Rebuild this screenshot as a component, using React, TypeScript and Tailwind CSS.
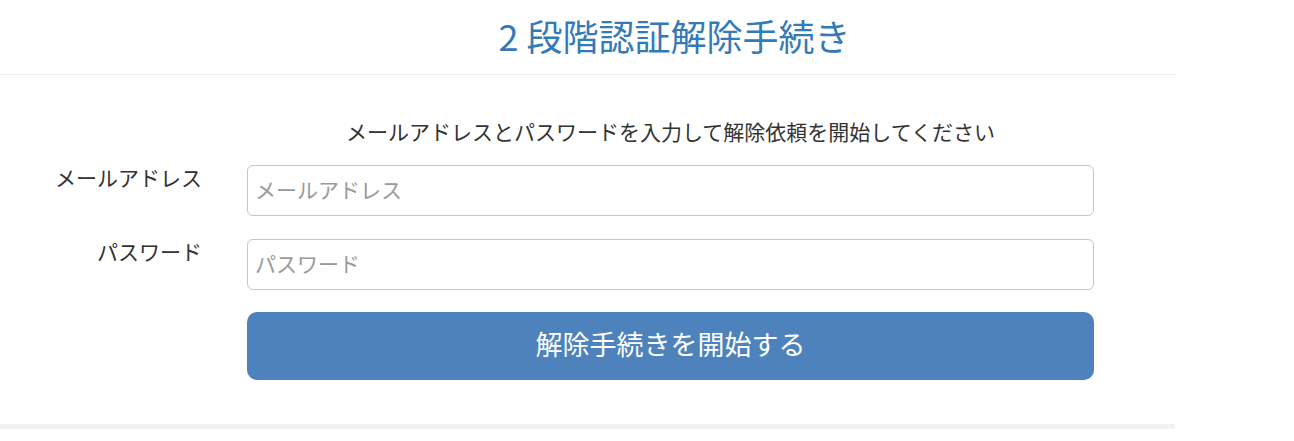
import React from "react";

const font = { fontFamily: '"Noto Sans CJK JP", "Noto Sans", sans-serif' };

export default function App() {
  return (
    <div className="w-[1294px] h-[441px] bg-white" style={font}>
      <div className="w-[1175px]">
        {/* page header */}
        <div className="h-[75px] border-b border-[#eeeeee] flex">
          <div className="w-[247px] shrink-0" />
          <h1 className="w-[847px] pl-[8px] text-center text-[36px] leading-[70px] text-[#337ab7] font-normal">
            2 段階認証解除手続き
          </h1>
        </div>

        {/* form */}
        <div className="pt-[45px] pb-[44px] border-b-[5px] border-[#f2f2f2]">
          <div className="flex">
            <div className="w-[247px] shrink-0" />
            <p className="w-[847px] text-center text-[21px] leading-[22px] text-[#333333]">
              メールアドレスとパスワードを入力して解除依頼を開始してください
            </p>
          </div>

          <div className="flex mt-[23px]">
            <label className="w-[202px] shrink-0 text-right text-[21px] leading-[24px] text-[#333333]">
              メールアドレス
            </label>
            <div className="w-[45px] shrink-0" />
            <input
              type="text"
              placeholder="メールアドレス"
              className="w-[847px] h-[51px] border border-[#c6c6c6] rounded-[6px] px-[7px] pb-[4px] text-[21px] text-[#555555] placeholder:text-[#9a9a9a] outline-none"
              style={font}
            />
          </div>

          <div className="flex mt-[23px]">
            <label className="w-[202px] shrink-0 text-right text-[21px] leading-[24px] text-[#333333]">
              パスワード
            </label>
            <div className="w-[45px] shrink-0" />
            <input
              type="password"
              placeholder="パスワード"
              className="w-[847px] h-[51px] border border-[#c6c6c6] rounded-[6px] px-[7px] pb-[4px] text-[21px] text-[#555555] placeholder:text-[#9a9a9a] outline-none"
              style={font}
            />
          </div>

          <div className="flex mt-[22px]">
            <div className="w-[247px] shrink-0" />
            <button
              type="button"
              className="w-[847px] h-[68px] rounded-[10px] bg-[#4d82bc] text-white text-[27px] flex items-center justify-center pb-[4px]"
              style={font}
            >
              解除手続きを開始する
            </button>
          </div>
        </div>
      </div>
    </div>
  );
}
